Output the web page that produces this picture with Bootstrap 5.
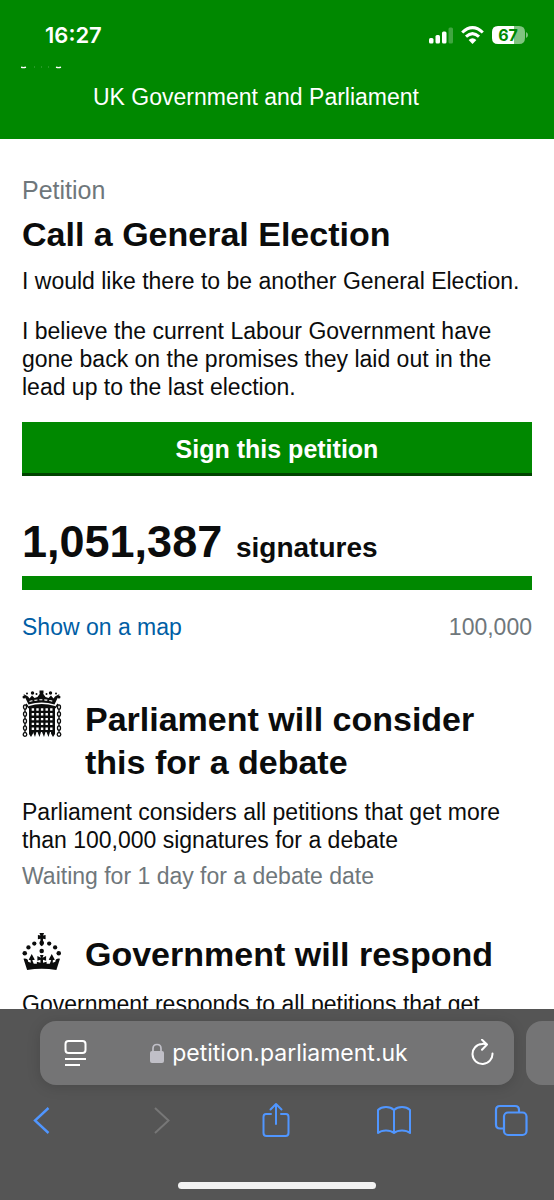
<!DOCTYPE html>
<html lang="en">
<head>
<meta charset="utf-8">
<meta name="viewport" content="width=device-width, initial-scale=1">
<title>Call a General Election - Petitions</title>
<link href="https://cdn.jsdelivr.net/npm/bootstrap@5.3.0/dist/css/bootstrap.min.css" rel="stylesheet">
<style>
  body { font-family: "Liberation Sans", Arial, sans-serif; font-size: 23px; line-height: 28px; color: #0b0c0c; background: #fff; }
  .ui-font { font-family: Inter, "Liberation Sans", sans-serif; }
  svg { display: block; flex: none; }
  .site-top { background: #008800; color: #fff; padding-bottom: 27px; }
  .status { padding: 20px 26px 0 45px; height: 66px; }
  .clock { font-size: 22px; line-height: 30px; font-weight: 600; }
  .clipped-logo { padding-left: 21px; height: 17px; }
  .site-name { color: #fff; font-size: 23px; padding-left: 93px; }
  .page { padding: 35px 22px 0 22px; min-height: 0; }
  .muted { color: #6f777b; }
  .kicker { font-size: 25px; line-height: 32px; }
  h1 { font-size: 34px; line-height: 44px; font-weight: 700; margin: 6px 0 11px; }
  h2 { font-size: 34px; line-height: 43px; font-weight: 700; margin: 0; }
  .intro { margin-bottom: 22px; }
  .sign { background: #008800; color: #fff; border: 0; border-radius: 0; box-shadow: inset 0 -3px 0 #004400; font-size: 25px; line-height: 30px; font-weight: 700; padding: 12px; margin-top: 21px; }
  .sign:hover { background: #007300; color: #fff; }
  .count { margin: 41px 0 3px; font-weight: 700; font-size: 28px; line-height: 50px; }
  .count strong { font-size: 45px; margin-right: 6px; }
  .progress { --bs-progress-height: 14px; --bs-progress-border-radius: 0; --bs-progress-bar-bg: #008800; }
  .under-bar { margin: 23px 0 49px; }
  .under-bar a { color: #005ea5; }
  .crest { width: 63px; }
  .stage p { margin: 0; }
  .stage h2 { margin-bottom: 14px; }
  .stage .muted { margin-top: 8px; }
  .stage + .stage { margin-top: 43px; }
  .browser { background: #555; padding: 12px 0 11px; }
  .tabs-row { padding-left: 40px; gap: 12px; }
  .address { background: #747475; color: #fff; border-radius: 16px; height: 64px; padding: 0 20px 0 24px; box-shadow: 0 2px 14px rgba(0,0,0,.15); }
  .address-text { font-size: 23px; gap: 8px; }
  .next-tab { background: #747475; border-radius: 16px 0 0 16px; width: 28px; height: 64px; }
  .tools { padding: 17px 25px 0 23px; }
  .tools .plain { width: 36px; display: flex; justify-content: center; }
  .plain { background: none; border: 0; padding: 0; color: #5096ff; }
  .plain:disabled { color: #777; }
  .home-line { width: 198px; height: 7px; border-radius: 4px; background: #f2f2f2; margin: 44px auto 0; }
</style>
</head>
<body>
<div class="vh-100 d-flex flex-column overflow-hidden">
  <header class="site-top flex-shrink-0">
    <div class="status d-flex justify-content-between align-items-start ui-font">
      <span class="clock">16:27</span>
      <div class="d-flex align-items-center pt-1">
        <svg width="24" height="24" viewBox="0 0 24 24" fill="#fff" aria-hidden="true"><rect x="0" y="14" width="4.500" height="5.500" rx="1.500"/><rect x="6.500" y="11" width="4.500" height="8.500" rx="1.500"/><rect x="13" y="7.500" width="4.500" height="12" rx="1.500"/><rect x="19.500" y="3.500" width="4.500" height="16" rx="1.500" opacity=".25"/></svg>
        <svg class="ms-2" width="23" height="24" viewBox="0 0 23 24" fill="none" stroke="#fff" stroke-width="3" aria-hidden="true"><path d="M1.200 8.500Q11.500 -1.300 21.800 8.500M5 12.700Q11.500 6.600 18 12.700"/><path d="M7.600 16Q11.500 12.300 15.400 16L11.500 20Z" fill="#fff" stroke="none"/></svg>
        <svg class="ms-2" width="36" height="24" viewBox="0 0 36 24" role="img" aria-label="Battery"><path d="M6 2H22V20H6Q0 20 0 14V8Q0 2 6 2Z" fill="#fff"/><path d="M22 2H27Q33 2 33 8V14Q33 20 27 20H22Z" fill="#80c480"/><path d="M34 8Q36 9 36 11T34 14Z" fill="#80c480"/><text x="16" y="17" text-anchor="middle" font-size="16" font-weight="700" fill="#008800">67</text></svg>
      </div>
    </div>
    <div class="clipped-logo"><svg width="42" height="4" viewBox="0 0 42 4" fill="none" stroke="#fff" stroke-width="1.300" aria-hidden="true"><path d="M0 1.200Q2.500 2.200 5 1.200M35 1.200Q37.500 2.200 40 1.200"/><path d="M13 1H14M20 1H21M27 1H28" opacity=".2"/></svg></div>
    <div class="site-name lh-sm">UK Government and Parliament</div>
  </header>

  <main class="page flex-grow-1 overflow-hidden">
    <div class="kicker muted">Petition</div>
    <h1>Call a General Election</h1>
    <p class="intro">I would like there to be another General Election.</p>
    <p class="mb-0">I believe the current Labour Government have gone back on the promises they laid out in the lead up to the last election.</p>
    <button type="button" class="btn sign w-100">Sign this petition</button>

    <p class="count"><strong>1,051,387</strong> signatures</p>
    <div class="progress" role="progressbar" aria-label="Signatures" aria-valuenow="100" aria-valuemin="0" aria-valuemax="100"><div class="progress-bar w-100"></div></div>
    <div class="under-bar d-flex justify-content-between">
      <a href="#map" class="text-decoration-none">Show on a map</a>
      <span class="muted">100,000</span>
    </div>

    <section class="stage">
      <div class="d-flex">
        <div class="crest flex-shrink-0">
          <svg width="40" height="48" viewBox="0 0 40 48" fill="#0b0c0c" aria-hidden="true">
            <path d="M6.500 14.500Q20 10.500 32.500 14.500L37.500 4L33 6.500L31.500 8.500L29 5.500L26.500 8L23.500 7L21 3.500H18L15.500 7L12.500 8L10 5.500L7.500 8.500L6 6.500L1.500 4Z"/>
            <path d="M17.500 .5H21.500V3L20.500 5H18.500L17.500 3Z"/>
            <circle cx="10.500" cy="3" r="1.700"/><circle cx="28.500" cy="3" r="1.700"/><circle cx="14.500" cy="4" r="1"/><circle cx="24.500" cy="4" r="1"/><circle cx="5" cy="3.500" r="1"/><circle cx="34" cy="3.500" r="1"/><circle cx="2" cy="7" r="1.500"/><circle cx="37" cy="7" r="1.500"/>
            <path d="M7.500 11.500Q19.500 8 31.500 11.500" fill="none" stroke="#fff" stroke-width="1.100" stroke-dasharray="3 2"/>
            <path d="M7 16Q19.500 12 33 16V44L31 47L29 43.500V42H28L26.500 47L24.500 42H23.500L22 47L20 42H19L17.500 47L15.500 42H14.500L13 47L11 42V43.500L9 47L7 44Z"/>
            <g stroke="#fff" stroke-width="2.400" stroke-dasharray="2.400 2.200"><path d="M9.700 19.500H32M9.700 24.300H32M9.700 29.100H32M9.700 33.900H32M9.700 38.700H32"/></g>
            <g fill="none" stroke="#0b0c0c" stroke-width="1.300"><path d="M4 14L7 18M36 14L33 18"/><ellipse cx="3" cy="17" rx="1.500" ry="2.200"/><ellipse cx="3" cy="24" rx="1.500" ry="2.200"/><ellipse cx="3" cy="31" rx="1.500" ry="2.200"/><ellipse cx="3" cy="38" rx="1.500" ry="2.200"/><circle cx="3" cy="44.500" r="1.800"/><ellipse cx="37" cy="17" rx="1.500" ry="2.200"/><ellipse cx="37" cy="24" rx="1.500" ry="2.200"/><ellipse cx="37" cy="31" rx="1.500" ry="2.200"/><ellipse cx="37" cy="38" rx="1.500" ry="2.200"/><circle cx="37" cy="44.500" r="1.800"/><path d="M3 19V22M3 26V29M3 33V36M3 40V43M37 19V22M37 26V29M37 33V36M37 40V43"/></g>
          </svg>
        </div>
        <h2 class="pt-2">Parliament will consider this for a debate</h2>
      </div>
      <p>Parliament considers all petitions that get more than 100,000 signatures for a debate</p>
      <p class="muted">Waiting for 1 day for a debate date</p>
    </section>

    <section class="stage">
      <div class="d-flex">
        <div class="crest flex-shrink-0">
          <svg width="40" height="38" viewBox="0 0 38 37" fill="#0b0c0c" aria-hidden="true">
            <path d="M16.500 0H21L20 2.500L22.500 2V6L20 5.500V7.500Q22.500 10 18.700 13Q15 10 17.500 7.500V5.500L15 6V2L17.500 2.500Z"/>
            <circle cx="11.500" cy="10.300" r="2.100"/><circle cx="5.800" cy="14" r="2.100"/><circle cx="2.200" cy="19.800" r="2.200"/><circle cx="26" cy="10.300" r="2.100"/><circle cx="31.800" cy="14" r="2.100"/><circle cx="35.300" cy="19.800" r="2.200"/><circle cx="18.700" cy="17.500" r="2.200"/>
            <path d="M4.500 36Q18.700 33.500 33 36L36.500 25Q32 24.500 32 28L29.500 29V26.500L31.500 26L28.500 20.500L25.500 26L28 26.500L26.500 30L23.500 30V28L20 29L20 26L23 27V22.500L19.500 24L20.500 21.500H17L18 24L14.500 22.500V27L17.500 26V29L14 28V30H11L9.500 26.500L12 26L9 20.500L6 26L8 26.500V29L5.500 28Q5.500 24.500 1 25Z"/>
          </svg>
        </div>
        <h2>Government will respond</h2>
      </div>
      <p>Government responds to all petitions that get</p>
    </section>
  </main>

  <footer class="browser flex-shrink-0 ui-font">
    <div class="tabs-row d-flex">
      <div class="address flex-grow-1 d-flex align-items-center justify-content-between">
        <button type="button" class="plain text-white" aria-label="Page menu"><svg width="23" height="28" viewBox="0 0 23 28" fill="none" stroke="currentColor" stroke-width="2"><rect x="1.500" y="2" width="20" height="12" rx="3"/><path d="M1 20H22M1 26H16"/></svg></button>
        <div class="address-text d-flex align-items-center">
          <svg width="14" height="20" viewBox="0 0 14 20" aria-hidden="true"><rect x="0" y="8" width="14" height="12" rx="2" fill="#c0bfc7"/><path d="M3 9V5.500Q3 1.500 7 1.500T11 5.500V9" fill="none" stroke="#c0bfc7" stroke-width="1.700"/></svg>
          <span>petition.parliament.uk</span>
        </div>
        <button type="button" class="plain text-white" aria-label="Reload"><svg width="23" height="28" viewBox="0 0 23 28" fill="none" stroke="currentColor" stroke-width="2" stroke-linecap="round" stroke-linejoin="round"><path d="M15.500 5.500Q13 4.500 11 5A10 10 0 1 0 21.500 14.500M11 .8L16 5.500L11 10.800"/></svg></button>
      </div>
      <div class="next-tab flex-shrink-0"></div>
    </div>
    <div class="tools d-flex justify-content-between align-items-center">
      <button type="button" class="plain" aria-label="Back"><svg width="17" height="36" viewBox="0 0 17 36" fill="none" stroke="currentColor" stroke-width="2.400"><path d="M15.500 6L2 18.500L15.500 31"/></svg></button>
      <button type="button" class="plain" aria-label="Forward" disabled><svg width="23" height="36" viewBox="0 0 23 36" fill="none" stroke="currentColor" stroke-width="2"><path d="M8 6L21.500 18.500L8 31"/></svg></button>
      <button type="button" class="plain" aria-label="Share"><svg width="28" height="36" viewBox="0 0 28 36" fill="none" stroke="currentColor" stroke-width="2" stroke-linecap="round" stroke-linejoin="round"><path d="M9 12H4Q1.500 12 1.500 15V31Q1.500 34 4.500 34H23.500Q26.500 34 26.500 31V15Q26.500 12 24 12H19M14 22V2M8.500 7.500L14 2L19.500 7.500"/></svg></button>
      <button type="button" class="plain" aria-label="Bookmarks"><svg width="36" height="36" viewBox="0 0 36 36" fill="none" stroke="currentColor" stroke-width="2" stroke-linejoin="round"><path d="M18 8Q15 5 10 5T2 8V31Q5 28.500 10 28.500T18 31Q21 28.500 26 28.500T34 31V8Q31 5 26 5T18 8V31"/></svg></button>
      <button type="button" class="plain" aria-label="Tabs"><svg width="34" height="36" viewBox="0 0 34 36" fill="none" stroke="currentColor" stroke-width="2.200"><rect x="10" y="10.500" width="22.500" height="22.500" rx="4"/><path d="M10 26.500H6Q2 26.500 2 22.500V8Q2 4 6 4H21Q25 4 25 8V10.500"/></svg></button>
    </div>
    <div class="home-line"></div>
  </footer>
</div>
<script src="https://cdn.jsdelivr.net/npm/bootstrap@5.3.0/dist/js/bootstrap.bundle.min.js"></script>
</body>
</html>
